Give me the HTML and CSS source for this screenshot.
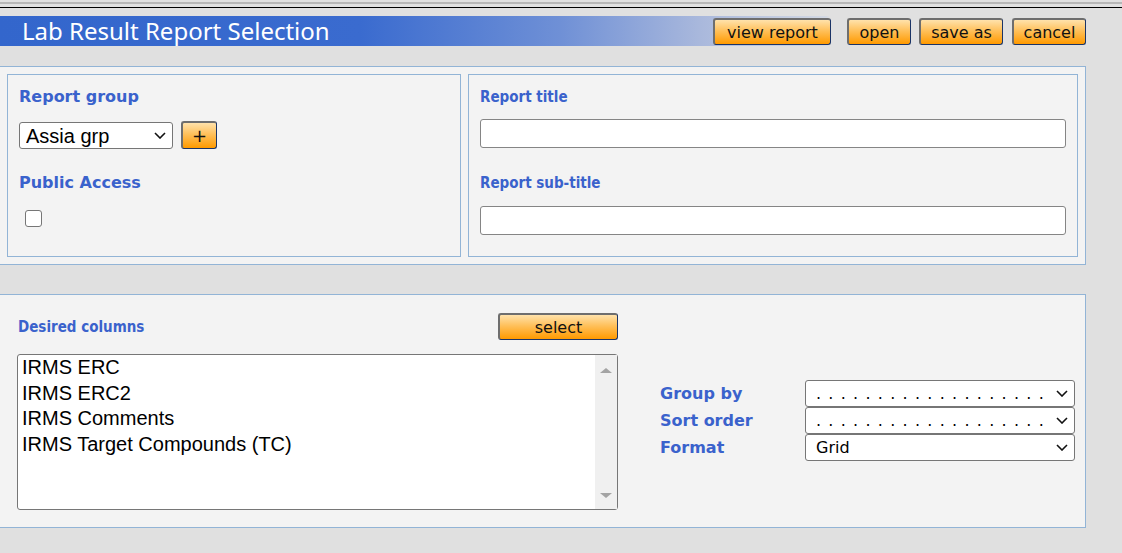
FILE: index.html
```html
<!DOCTYPE html>
<html lang="en">
<head>
    <meta charset="UTF-8">
    <title>Lab Result Report Selection</title>
    <link rel="stylesheet" href="styles.css">
</head>
<body>
    <div class="rule"></div>

    <div class="page">
        <div class="header">
            <h1 class="title">Lab Result Report Selection</h1>
            <div class="actions">
                <button class="btn btn-view">view report</button>
                <button class="btn btn-open">open</button>
                <button class="btn btn-save">save as</button>
                <button class="btn btn-cancel">cancel</button>
            </div>
        </div>

        <!-- report settings -->
        <div class="panel top-panel">
            <div class="box box-left">
                <div class="label">Report group</div>
                <div class="group-row">
                    <span class="select-wrap">
                        <select class="select group-select">
                            <option>Assia grp</option>
                        </select>
                        <svg class="chev" width="12" height="7" viewBox="0 0 12 7"><path d="M1 1 L6 6 L11 1" fill="none" stroke="#111" stroke-width="1.6"/></svg>
                    </span>
                    <button class="btn btn-plus">+</button>
                </div>
                <div class="label label-public">Public Access</div>
                <input type="checkbox" class="check">
            </div>
            <div class="box box-right">
                <div class="label label-alt">Report title</div>
                <input type="text" class="text-input">
                <div class="label label-alt label-sub">Report sub-title</div>
                <input type="text" class="text-input input-sub">
            </div>
        </div>

        <!-- column selection -->
        <div class="panel bottom-panel">
            <div class="columns">
                <div class="columns-head">
                    <span class="label label-alt">Desired columns</span>
                    <button class="btn btn-select">select</button>
                </div>
                <div class="listbox">
                    <ul class="list-items">
                        <li>IRMS ERC</li>
                        <li>IRMS ERC2</li>
                        <li>IRMS Comments</li>
                        <li>IRMS Target Compounds (TC)</li>
                    </ul>
                    <div class="scrolltrack">
                        <span class="arrow arrow-up"></span>
                        <span class="arrow arrow-down"></span>
                    </div>
                </div>
            </div>

            <div class="options">
                <label class="label">Group by</label>
                <span class="select-wrap">
                    <select class="select opt-select dots"><option>. . . . . . . . . . . . . . . . . . .</option></select>
                    <svg class="chev" width="12" height="7" viewBox="0 0 12 7"><path d="M1 1 L6 6 L11 1" fill="none" stroke="#111" stroke-width="1.6"/></svg>
                </span>
                <label class="label">Sort order</label>
                <span class="select-wrap">
                    <select class="select opt-select dots"><option>. . . . . . . . . . . . . . . . . . .</option></select>
                    <svg class="chev" width="12" height="7" viewBox="0 0 12 7"><path d="M1 1 L6 6 L11 1" fill="none" stroke="#111" stroke-width="1.6"/></svg>
                </span>
                <label class="label">Format</label>
                <span class="select-wrap">
                    <select class="select opt-select"><option>Grid</option></select>
                    <svg class="chev" width="12" height="7" viewBox="0 0 12 7"><path d="M1 1 L6 6 L11 1" fill="none" stroke="#111" stroke-width="1.6"/></svg>
                </span>
            </div>
        </div>
    </div>
</body>
</html>
```

FILE: styles.css
```css
body {
    margin: 0;
    background-color: #e0e0e0;
    font-family: "DejaVu Sans", Verdana, sans-serif;
}
.rule {
    margin-top: 2px;
    height: 3px;
    border-top: 2px solid #b7b7b7;
    border-bottom: 1px solid #000;
}
.page {
    width: 1086px;
}
.header {
    display: flex;
    justify-content: space-between;
    margin-top: 8px;
    height: 30px;
    background: linear-gradient(to right, #3366cc 0px, #3a6bcf 360px, #6f90d6 560px, #a9b8dc 700px, #d3d9e4 826px, transparent 830px);
}
.title {
    margin: 0;
    padding-left: 22px;
    font-family: "Noto Sans", sans-serif;
    font-weight: normal;
    font-size: 24px;
    line-height: 30px;
    color: #fff;
}
.actions {
    display: flex;
    padding-top: 2px;
}
.btn {
    height: 27px;
    padding: 0;
    font-family: "DejaVu Sans", Verdana, sans-serif;
    font-size: 16px;
    color: #111;
    background: linear-gradient(to bottom, #ffe2ab 0%, #ffc05a 45%, #ff9a00 100%);
    border-style: solid;
    border-width: 2px 1px 1px 2px;
    border-color: #6e6e6e #1b3466 #1b3466 #6e6e6e;
    border-radius: 3px;
    cursor: pointer;
}
.btn-view { width: 118px; }
.btn-open { width: 64px; margin-left: 16px; }
.btn-save { width: 84px; margin-left: 8px; }
.btn-cancel { width: 74px; margin-left: 9px; }

.panel {
    background-color: #f3f3f3;
    border: 1px solid #92b4d6;
    border-left: none;
}
.top-panel {
    display: flex;
    gap: 7px;
    margin-top: 20px;
    padding: 7px;
}
.box {
    box-sizing: border-box;
    height: 183px;
    border: 1px solid #92b4d6;
    padding: 13px 11px 0 11px;
}
.box-left {
    width: 456px;
}
.box-right {
    flex: 1;
}
.label {
    display: block;
    font-weight: bold;
    font-size: 16px;
    line-height: 18px;
    color: #3a62cc;
}
.label-alt {
    font-family: "DejaVu Sans Condensed", "DejaVu Sans", sans-serif;
    font-stretch: condensed;
    font-size: 15px;
}
.group-row {
    display: flex;
    align-items: flex-start;
    margin-top: 16px;
}
.select-wrap {
    position: relative;
    display: inline-block;
}
.chev {
    position: absolute;
    right: 7px;
    top: 10px;
    pointer-events: none;
}
.select {
    appearance: none;
    height: 27px;
    background-color: #fff;
    border: 1px solid #767676;
    border-radius: 3px;
    color: #000;
}
.group-select {
    width: 154px;
    padding-left: 6px;
    font-family: "Liberation Sans", Arial, sans-serif;
    font-size: 20px;
}
.btn-plus {
    width: 36px;
    height: 28px;
    margin-left: 8px;
    margin-top: -1px;
    font-size: 18px;
    line-height: 20px;
}
.label-public {
    margin-top: 25px;
}
.check {
    appearance: none;
    display: block;
    width: 17px;
    height: 17px;
    margin: 18px 0 0 6px;
    background: #fff;
    border: 1px solid #767676;
    border-radius: 3px;
}
.text-input {
    display: block;
    box-sizing: border-box;
    width: 586px;
    height: 29px;
    margin-top: 13px;
    background: #fff;
    border: 1px solid #858585;
    border-radius: 3px;
}
.label-sub {
    margin-top: 26px;
}
.input-sub {
    margin-top: 14px;
}

.bottom-panel {
    display: flex;
    margin-top: 29px;
    padding: 18px 0 17px 17px;
}
.columns {
    width: 601px;
}
.columns-head {
    display: flex;
    justify-content: space-between;
    align-items: center;
}
.columns-head .label {
    margin-left: 1px;
}
.btn-select {
    width: 120px;
}
.listbox {
    display: flex;
    height: 154px;
    margin-top: 14px;
    background: #fff;
    border: 1px solid #767676;
    border-radius: 3px;
}
.list-items {
    flex: 1;
    margin: 0;
    padding: 0 0 0 4px;
    list-style: none;
    font-family: "Liberation Sans", Arial, sans-serif;
    font-size: 20px;
    line-height: 25.5px;
    color: #000;
}
.scrolltrack {
    display: flex;
    flex-direction: column;
    justify-content: space-between;
    align-items: center;
    width: 22px;
    padding: 13px 0 11px;
    background: #f0f0f0;
    box-sizing: border-box;
}
.arrow {
    width: 0;
    height: 0;
    border-left: 6px solid transparent;
    border-right: 6px solid transparent;
}
.arrow-up {
    border-bottom: 5px solid #a3a3a3;
}
.arrow-down {
    border-top: 5px solid #a3a3a3;
}

.options {
    display: grid;
    grid-template-columns: 145px 270px;
    grid-auto-rows: 27px;
    align-items: center;
    margin-left: 42px;
    margin-top: 67px;
    align-self: flex-start;
}
.opt-select {
    width: 270px;
    padding-left: 10px;
    font-family: "DejaVu Sans", Verdana, sans-serif;
    font-size: 16px;
}
.dots {
    letter-spacing: 1.1px;
}
```
